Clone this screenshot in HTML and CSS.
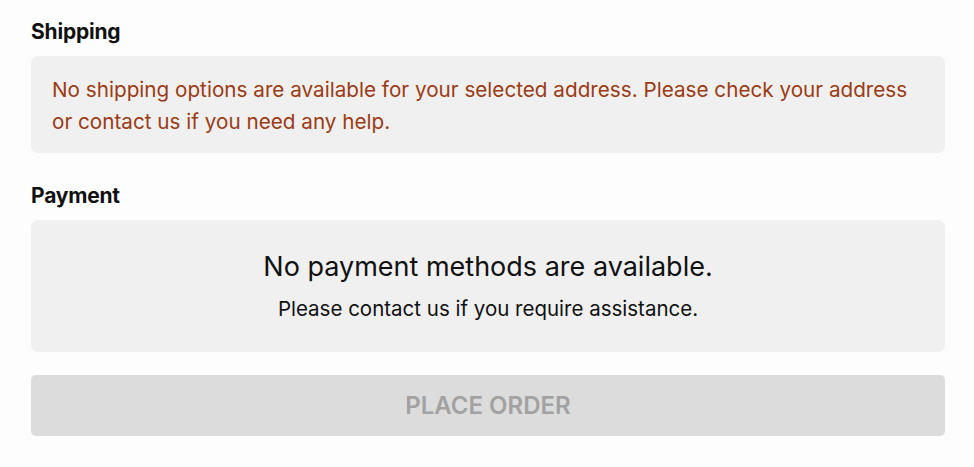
FILE: index.html
```html
<!DOCTYPE html>
<html lang="en">
<head>
    <meta charset="UTF-8">
    <meta name="viewport" content="width=device-width, initial-scale=1.0">
    <title>Checkout</title>
    <link rel="stylesheet" href="styles.css">
</head>
<body>

<div class="checkout">
    <section class="block">
        <h2>Shipping</h2>
        <div class="notice notice-warn">
            No shipping options are available for your selected address. Please check your address or contact us if you need any help.
        </div>
    </section>

    <section class="block">
        <h2>Payment</h2>
        <div class="notice notice-empty">
            <p class="empty-title">No payment methods are available.</p>
            <p class="empty-sub">Please contact us if you require assistance.</p>
        </div>
    </section>

    <button class="place-order" disabled>Place Order</button>
</div>

</body>
</html>
```

FILE: styles.css
```css
body {
    font-family: Inter, "Noto Sans", sans-serif;
    margin: 0;
    background-color: #fdfdfd;
    color: #111;
}
.checkout {
    padding: 18px 29px 0 31px;
    display: flex;
    flex-direction: column;
}
.block {
    margin-bottom: 29px;
}
.block + .block {
    margin-bottom: 23px;
}
h2 {
    font-size: 21px;
    font-weight: 700;
    margin: 0 0 10px;
    line-height: 28px;
    letter-spacing: -0.2px;
}
.notice {
    background-color: #f0f0f0;
    border-radius: 7px;
}
.notice-warn {
    color: #9b3b14;
    font-size: 20.7px;
    line-height: 32px;
    padding: 18px 21px 15px;
}
.notice-empty {
    text-align: center;
    padding: 29px 20px;
}
.notice-empty p {
    margin: 0;
}
.empty-title {
    font-size: 27px;
    line-height: 36px;
    margin-bottom: 10px !important;
}
.empty-sub {
    font-size: 20.5px;
    line-height: 28px;
}
.place-order {
    font-family: inherit;
    background-color: #dcdcdc;
    color: #a2a2a2;
    border: none;
    border-radius: 5px;
    height: 61px;
    font-size: 24px;
    font-weight: 600;
    text-transform: uppercase;
    cursor: not-allowed;
}
```
